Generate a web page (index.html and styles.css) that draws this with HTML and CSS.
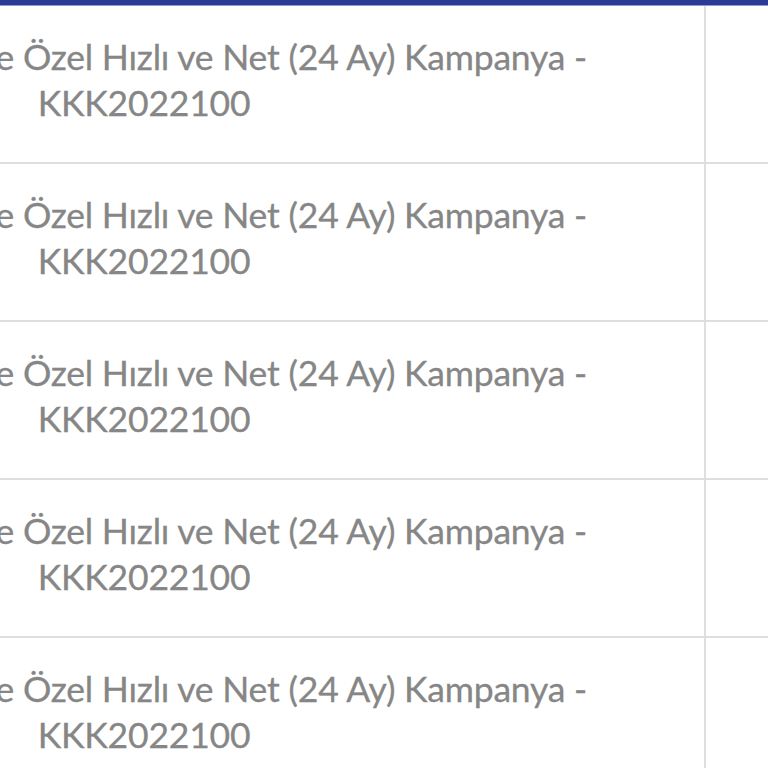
FILE: index.html
```html
<!DOCTYPE html>
<html lang="tr">
<head>
<meta charset="utf-8">
<link rel="stylesheet" href="styles.css">
</head>
<body>
<div class="topbar"></div>
<div class="table">
  <div class="row"><div class="cell name"><span class="l1">Evde İnternet Fibere Özel Hızlı ve Net (24 Ay) Kampanya -</span><span class="l2">KKK2022100</span></div><div class="cell side"></div></div>
  <div class="row"><div class="cell name"><span class="l1">Evde İnternet Fibere Özel Hızlı ve Net (24 Ay) Kampanya -</span><span class="l2">KKK2022100</span></div><div class="cell side"></div></div>
  <div class="row"><div class="cell name"><span class="l1">Evde İnternet Fibere Özel Hızlı ve Net (24 Ay) Kampanya -</span><span class="l2">KKK2022100</span></div><div class="cell side"></div></div>
  <div class="row"><div class="cell name"><span class="l1">Evde İnternet Fibere Özel Hızlı ve Net (24 Ay) Kampanya -</span><span class="l2">KKK2022100</span></div><div class="cell side"></div></div>
  <div class="row"><div class="cell name"><span class="l1">Evde İnternet Fibere Özel Hızlı ve Net (24 Ay) Kampanya -</span><span class="l2">KKK2022100</span></div><div class="cell side"></div></div>
</div>
</body>
</html>
```
FILE: styles.css
```css
html, body {
  margin: 0;
  padding: 0;
  background: #ffffff;
  overflow: hidden;
}
body {
  width: 768px;
  height: 768px;
  font-family: Lato, "Open Sans", sans-serif;
}
.topbar {
  height: 6px;
  background: #2d3b94;
  border-bottom: 1px solid #8e9ad0;
  box-sizing: border-box;
}
.table {
  display: flex;
  flex-direction: column;
  margin-left: -418px;
  width: 1186px;
}
.row {
  display: flex;
  height: 158px;
  border-bottom: 2px solid #dedede;
  box-sizing: border-box;
}
.cell {
  box-sizing: border-box;
}
.name {
  width: 1124px;
  border-right: 2px solid #dedede;
  display: flex;
  flex-direction: column;
  align-items: center;
  justify-content: center;
  padding-bottom: 8px;
  padding-left: 2px;
  color: #868686;
  font-size: 35.5px;
  line-height: 46px;
  letter-spacing: -0.2px;
  -webkit-text-stroke: 0.3px #868686;
  white-space: nowrap;
}
.l1, .l2 {
  display: block;
}
.side {
  flex: 1;
}
```
